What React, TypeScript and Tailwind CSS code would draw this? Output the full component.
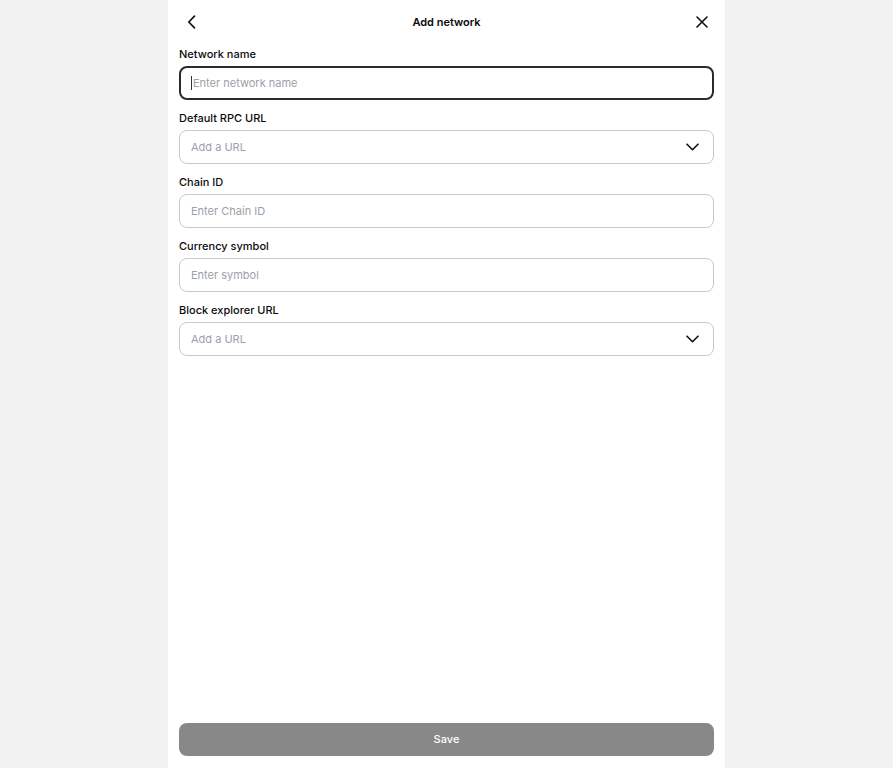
import React from "react";

const font = { fontFamily: "Inter, 'Liberation Sans', sans-serif" };

const ChevronDown = () => (
  <svg width="13" height="8" viewBox="0 0 13 8" fill="none">
    <path d="M1 1.2l5.5 5.5 5.5-5.5" stroke="#111" strokeWidth="1.6" strokeLinecap="round" strokeLinejoin="round" />
  </svg>
);

const Field = ({
  label,
  placeholder,
  select,
  focused,
}: {
  label: string;
  placeholder: string;
  select?: boolean;
  focused?: boolean;
}) => (
  <div className="flex flex-col">
    <label className="text-[11px] font-medium leading-5 text-[#0a0b0d]">{label}</label>
    <div
      className={
        focused
          ? "mt-[2px] flex h-[34px] items-center rounded-lg border-2 border-[#2b2b2b] px-[10px]"
          : "mt-[2px] flex h-[34px] items-center rounded-lg border border-[#c9c9c9] px-[11px]"
      }
    >
      {focused && <span className="mr-px h-[14px] w-px bg-[#333]" />}
      <span className="flex-1 text-[11px] text-[#9ba1aa]">{placeholder}</span>
      {select && (
        <span className="mr-[3px] flex items-center">
          <ChevronDown />
        </span>
      )}
    </div>
  </div>
);

export default function App() {
  return (
    <div className="flex min-h-screen justify-center bg-[#f2f2f2]" style={font}>
      <div className="flex h-[768px] w-[557px] flex-col bg-white px-[11px] pb-[12px]">
        <div className="flex h-[44px] items-center justify-between">
          <button className="flex h-6 w-6 items-center justify-center">
            <svg width="9" height="14" viewBox="0 0 9 14" fill="none">
              <path d="M7.5 1.2L1.8 7l5.7 5.8" stroke="#111" strokeWidth="1.7" strokeLinecap="round" strokeLinejoin="round" />
            </svg>
          </button>
          <span className="text-[11px] font-semibold text-[#0a0b0d]">Add network</span>
          <button className="flex h-6 w-6 items-center justify-center">
            <svg width="12" height="12" viewBox="0 0 12 12" fill="none">
              <path d="M1 1l10 10M11 1L1 11" stroke="#111" strokeWidth="1.6" strokeLinecap="round" />
            </svg>
          </button>
        </div>
        <div className="flex flex-col gap-[8px]">
          <Field label="Network name" placeholder="Enter network name" focused />
          <Field label="Default RPC URL" placeholder="Add a URL" select />
          <Field label="Chain ID" placeholder="Enter Chain ID" />
          <Field label="Currency symbol" placeholder="Enter symbol" />
          <Field label="Block explorer URL" placeholder="Add a URL" select />
        </div>
        <div className="flex-1" />
        <button className="h-[33px] w-full rounded-lg bg-[#888888] text-[11px] font-medium text-white">
          Save
        </button>
      </div>
    </div>
  );
}
